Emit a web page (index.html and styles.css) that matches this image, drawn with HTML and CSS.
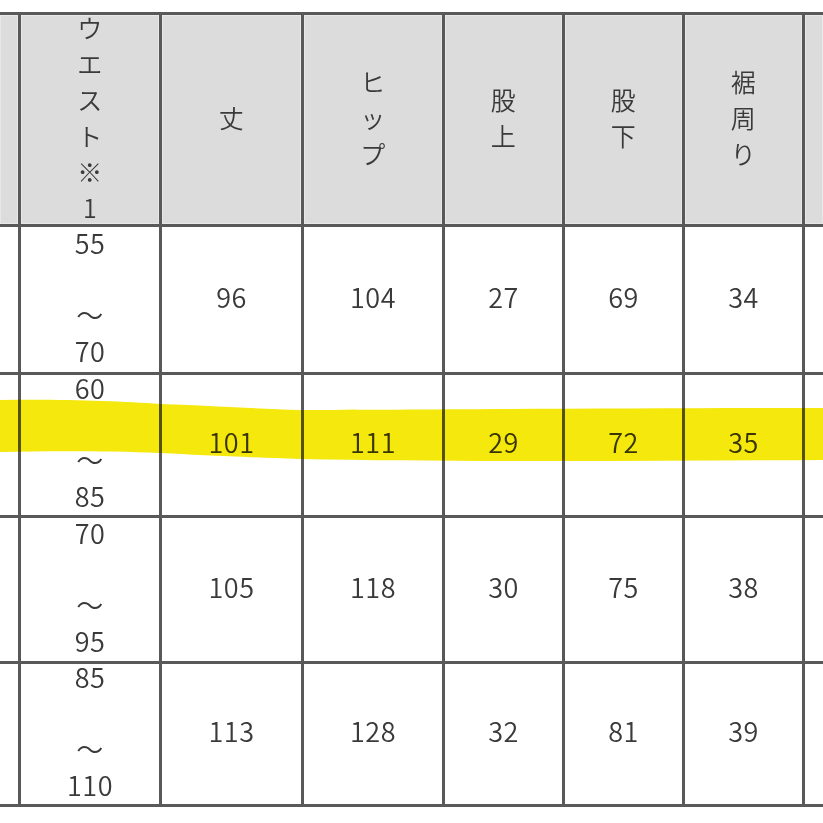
FILE: index.html
```html
<!DOCTYPE html>
<html lang="ja">
<head>
<meta charset="utf-8">
<title>サイズ表</title>
<link rel="stylesheet" href="styles.css">
</head>
<body>
<div class="page">
  <div class="sheet">
    <div class="grid">
      <div class="cell head"></div>
      <div class="cell head">ウ<br>エ<br>ス<br>ト<br>※<br>1</div>
      <div class="cell head">丈</div>
      <div class="cell head">ヒ<br>ッ<br>プ</div>
      <div class="cell head">股<br>上</div>
      <div class="cell head">股<br>下</div>
      <div class="cell head">裾<br>周<br>り</div>
      <div class="cell head"></div>

      <div class="cell"></div>
      <div class="cell range">55<br><br>～<br>70</div>
      <div class="cell">96</div>
      <div class="cell">104</div>
      <div class="cell">27</div>
      <div class="cell">69</div>
      <div class="cell">34</div>
      <div class="cell"></div>

      <div class="cell"></div>
      <div class="cell range">60<br><br>～<br>85</div>
      <div class="cell">101</div>
      <div class="cell">111</div>
      <div class="cell">29</div>
      <div class="cell">72</div>
      <div class="cell">35</div>
      <div class="cell"></div>

      <div class="cell"></div>
      <div class="cell range">70<br><br>～<br>95</div>
      <div class="cell">105</div>
      <div class="cell">118</div>
      <div class="cell">30</div>
      <div class="cell">75</div>
      <div class="cell">38</div>
      <div class="cell"></div>

      <div class="cell"></div>
      <div class="cell range">85<br><br>～<br>110</div>
      <div class="cell">113</div>
      <div class="cell">128</div>
      <div class="cell">32</div>
      <div class="cell">81</div>
      <div class="cell">39</div>
      <div class="cell"></div>
    </div>
    <svg class="marker" width="823" height="823" viewBox="0 0 823 823" aria-hidden="true">
      <path d="M0 400 C60 399 120 401 160 404 C220 406 260 409 300 410 C420 410 600 408 823 408 L823 460 C640 461 460 462 300 459 C240 457 200 455 160 453 C110 451 50 451 0 452 Z" fill="#f4e80c"/>
    </svg>
  </div>
</div>
</body>
</html>
```

FILE: styles.css
```css
html, body {
  margin: 0;
  padding: 0;
  background: #ffffff;
}

.page {
  width: 823px;
  height: 823px;
  overflow: hidden;
  background: #ffffff;
}

.sheet {
  position: relative;
  padding-top: 12px;
}

.grid {
  display: grid;
  grid-template-columns: 18px 138px 139px 138px 117px 117px 117px 18px;
  grid-template-rows: 209px 145px 140px 143px 140px;
  gap: 3px;
  padding: 3px 0;
  background: #595959;
  font-family: "Noto Sans CJK JP", "Noto Sans", sans-serif;
  font-weight: 350;
  font-size: 27px;
  line-height: 36px;
  color: #3a3a3a;
}

.cell {
  background: #ffffff;
  display: flex;
  align-items: center;
  justify-content: center;
  text-align: center;
  padding-bottom: 6px;
  letter-spacing: 0.5px;
}

.head {
  background: #dcdcdc;
  box-shadow: inset 0 0 0 1px #e8e8e8;
  font-size: 25px;
}

.range {
  line-height: 36px;
}

.marker {
  position: absolute;
  left: 0;
  top: 0;
  pointer-events: none;
  mix-blend-mode: multiply;
}
```
